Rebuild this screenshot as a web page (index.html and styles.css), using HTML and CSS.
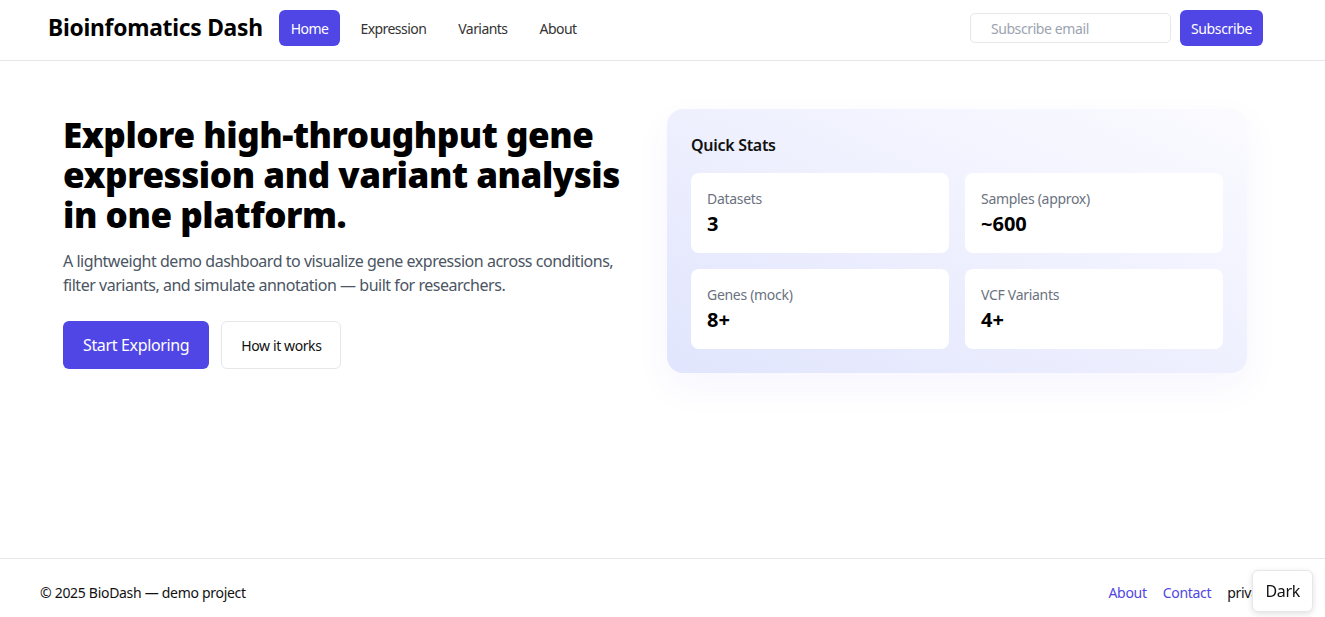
FILE: index.html
```html
<!DOCTYPE html>
<html lang="en">
<head>
<meta charset="utf-8">
<title>Bioinfomatics Dash</title>
<link rel="stylesheet" href="styles.css">
</head>
<body>
<header class="topbar">
  <div class="brand">Bioinfomatics Dash</div>
  <nav class="nav">
    <a class="nav-link active" href="#">Home</a>
    <a class="nav-link" href="#">Expression</a>
    <a class="nav-link" href="#">Variants</a>
    <a class="nav-link" href="#">About</a>
  </nav>
  <form class="subscribe">
    <input class="sub-input" type="email" placeholder="Subscribe email">
    <button class="btn-primary small" type="button">Subscribe</button>
  </form>
</header>
<main class="hero">
  <section class="hero-text">
    <h1 class="hero-title">Explore high-throughput gene expression and variant analysis in one platform.</h1>
    <p class="hero-lead">A lightweight demo dashboard to visualize gene expression across conditions, filter variants, and simulate annotation — built for researchers.</p>
    <div class="hero-actions">
      <button class="btn-primary large" type="button">Start Exploring</button>
      <button class="btn-ghost" type="button">How it works</button>
    </div>
  </section>
  <aside class="stats-card">
    <h2 class="stats-title">Quick Stats</h2>
    <div class="stats-grid">
      <div class="stat"><div class="stat-label">Datasets</div><div class="stat-value">3</div></div>
      <div class="stat"><div class="stat-label">Samples (approx)</div><div class="stat-value">~600</div></div>
      <div class="stat"><div class="stat-label">Genes (mock)</div><div class="stat-value">8+</div></div>
      <div class="stat"><div class="stat-label">VCF Variants</div><div class="stat-value">4+</div></div>
    </div>
  </aside>
</main>
<footer class="footer">
  <div class="copy">© 2025 BioDash — demo project</div>
  <div class="footer-links">
    <a class="flink" href="#">About</a>
    <a class="flink" href="#">Contact</a>
    <span class="fplain">privacy</span>
  </div>
</footer>
<button class="theme-toggle" type="button">Dark</button>
</body>
</html>
```

FILE: styles.css
```css
* { box-sizing: border-box; }
body {
  margin: 0;
  font-family: "Noto Sans", "Open Sans", sans-serif;
  color: #111;
  background: #fff;
  letter-spacing: -0.3px;
}
.topbar {
  height: 61px;
  border-bottom: 1px solid #e5e7eb;
  display: flex;
  align-items: flex-start;
  padding: 10px 62px 0 48px;
}
.brand {
  font-size: 22.8px;
  font-weight: 700;
  line-height: 36px;
  color: #000;
  margin-right: 16px;
  letter-spacing: -0.25px;
}
.nav { display: flex; align-items: center; gap: 8px; }
.nav-link {
  font-size: 14px;
  color: #333;
  text-decoration: none;
  height: 36px;
  display: flex;
  align-items: center;
  padding: 0 12px;
  border-radius: 6px;
  letter-spacing: -0.55px;
}
.nav-link.active { background: #4f46e5; color: #fff; }
.subscribe { margin-left: auto; display: flex; align-items: center; gap: 9px; }
.sub-input {
  width: 201px;
  height: 30px;
  border: 1px solid #e5e7eb;
  border-radius: 5px;
  padding: 0 20px;
  font: inherit;
  font-size: 14px;
  letter-spacing: -0.4px;
  color: #111;
}
.sub-input::placeholder { color: #9ca3af; }
.btn-primary {
  background: #4f46e5;
  color: #fff;
  border: none;
  border-radius: 6px;
  font: inherit;
  letter-spacing: -0.35px;
  cursor: pointer;
}
.btn-primary.small { height: 36px; padding: 0 11px; font-size: 14px; }
.btn-primary.large { height: 48px; padding: 0 20px; font-size: 16px; }
.hero {
  min-height: 497px;
  display: grid;
  grid-template-columns: 1fr 580px;
  gap: 40px;
  align-items: start;
  padding: 48px 78px 0 63px;
}
.hero-text { padding-top: 6px; }
.hero-title {
  margin: 0;
  font-size: 35px;
  line-height: 40px;
  font-weight: 900;
  color: #000;
  letter-spacing: -0.45px;
}
.hero-lead {
  margin: 14px 0 0;
  font-size: 16px;
  line-height: 24px;
  color: #4b5563;
  letter-spacing: -0.47px;
}
.hero-actions { display: flex; gap: 12px; margin-top: 24px; }
.btn-ghost {
  height: 48px;
  padding: 0 19px;
  border: 1px solid #e5e7eb;
  background: #fff;
  border-radius: 6px;
  font: inherit;
  font-size: 14px;
  letter-spacing: -0.4px;
  color: #111;
}
.stats-card {
  border-radius: 16px;
  padding: 24px;
  background: linear-gradient(to top right, #e1e5fd 0%, #eef0fe 50%, #fbfbff 100%);
  box-shadow: 0 14px 36px rgba(79, 70, 229, 0.05);
}
.stats-title {
  margin: 0 0 16px;
  font-size: 16px;
  font-weight: 600;
  line-height: 24px;
  color: #111;
}
.stats-grid {
  display: grid;
  grid-template-columns: 1fr 1fr;
  gap: 16px;
}
.stat {
  background: #fff;
  border-radius: 8px;
  height: 80px;
  padding: 16px;
}
.stat-label { font-size: 14px; color: #6b7280; line-height: 20px; }
.stat-value { font-size: 20px; font-weight: 700; line-height: 30px; color: #000; letter-spacing: 0; }
.footer {
  border-top: 1px solid #e5e7eb;
  display: flex;
  align-items: center;
  padding: 24px 53px 24px 40px;
  font-size: 14px;
  line-height: 20px;
}
.copy { color: #111; }
.footer-links { margin-left: auto; display: flex; gap: 16px; }
.flink { color: #4f46e5; text-decoration: none; }
.fplain { color: #111; }
.theme-toggle {
  position: fixed;
  right: 12px;
  bottom: 5px;
  height: 42px;
  padding: 0 12px;
  background: #fff;
  border: 1px solid #e5e7eb;
  border-radius: 6px;
  box-shadow: 0 2px 6px rgba(0, 0, 0, 0.12);
  font: inherit;
  font-size: 16px;
  letter-spacing: -0.3px;
  color: #111;
}
```
